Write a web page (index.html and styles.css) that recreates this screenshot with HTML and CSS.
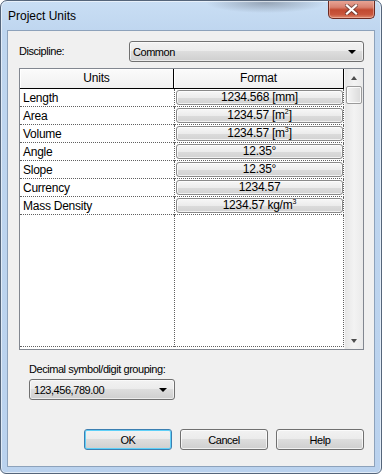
FILE: index.html
```html
<!DOCTYPE html>
<html>
<head>
<meta charset="utf-8">
<link rel="stylesheet" href="styles.css">
</head>
<body>
<div class="window">
  <div class="titlebar">
    <span class="title">Project Units</span>
    <div class="close">
      <svg width="13" height="11" viewBox="0 0 13 11">
        <path d="M2 1.5 L11 9.5 M11 1.5 L2 9.5" stroke="#3a2a2a" stroke-width="4" stroke-linecap="square" fill="none" opacity="0.55"/>
        <path d="M2 1.5 L11 9.5 M11 1.5 L2 9.5" stroke="#ffffff" stroke-width="2.2" stroke-linecap="square" fill="none"/>
      </svg>
    </div>
  </div>
  <div class="client">
    <div class="discipline">
      <span class="label">Discipline:</span>
      <div class="combo combo-wide"><span>Common</span><span class="arrow"></span></div>
    </div>
    <div class="grid">
      <div class="grid-main">
        <div class="grow head">
          <div class="hcell c1">Units</div>
          <div class="hcell c2">Format</div>
        </div>
        <div class="grow"><div class="cell c1">Length</div><div class="cell c2"><div class="fbtn"><span>1234.568 [mm]</span></div></div></div>
        <div class="grow"><div class="cell c1">Area</div><div class="cell c2"><div class="fbtn"><span>1234.57 [m<sup>2</sup>]</span></div></div></div>
        <div class="grow"><div class="cell c1">Volume</div><div class="cell c2"><div class="fbtn"><span>1234.57 [m<sup>3</sup>]</span></div></div></div>
        <div class="grow"><div class="cell c1">Angle</div><div class="cell c2"><div class="fbtn"><span>12.35°</span></div></div></div>
        <div class="grow"><div class="cell c1">Slope</div><div class="cell c2"><div class="fbtn"><span>12.35°</span></div></div></div>
        <div class="grow"><div class="cell c1">Currency</div><div class="cell c2"><div class="fbtn"><span>1234.57</span></div></div></div>
        <div class="grow"><div class="cell c1">Mass Density</div><div class="cell c2"><div class="fbtn"><span>1234.57 kg/m<sup>3</sup></span></div></div></div>
        <div class="grow fill"><div class="cell c1"></div><div class="cell c2"></div></div>
      </div>
      <div class="vscroll">
        <div class="sbtn"><span class="up"></span></div>
        <div class="thumb"></div>
        <div class="strack"></div>
        <div class="sbtn"><span class="down"></span></div>
      </div>
    </div>
    <div class="decimal">
      <div class="label">Decimal symbol/digit grouping:</div>
      <div class="combo combo-small"><span>123,456,789.00</span><span class="arrow"></span></div>
    </div>
    <div class="buttons">
      <div class="btn default">OK</div>
      <div class="btn">Cancel</div>
      <div class="btn">Help</div>
    </div>
  </div>
</div>
</body>
</html>
```

FILE: styles.css
```css
html, body {
  margin: 0;
  padding: 0;
  background: #ffffff;
}

.window {
  width: 382px;
  height: 474px;
  box-sizing: border-box;
  border: 1px solid #55657a;
  border-radius: 7px 7px 6px 6px;
  background:
    radial-gradient(ellipse 60px 10px at 265px 2px, rgba(110, 120, 135, 0.55), rgba(110, 120, 135, 0) 100%),
    linear-gradient(to bottom, #c9def4 0px, #bfd6ef 30px, #bad2ee 100%);
  box-shadow: inset 0 0 0 1px rgba(255, 255, 255, 0.55);
  display: flex;
  flex-direction: column;
  font-family: "Liberation Sans", Arial, sans-serif;
  color: #000;
  overflow: hidden;
}

.titlebar {
  height: 29px;
  display: flex;
  justify-content: space-between;
  align-items: flex-start;
  flex: none;
}

.title {
  font-size: 12px;
  padding: 8px 0 0 7px;
  line-height: 14px;
  color: #000;
}

.close {
  width: 47px;
  height: 19px;
  margin-right: 6px;
  margin-top: -1px;
  box-sizing: border-box;
  border: 1px solid #6b2a22;
  border-top: none;
  border-radius: 0 0 5px 5px;
  background: linear-gradient(to bottom, #e9a99a 0%, #d88270 40%, #c24a31 55%, #c8553c 80%, #de8a6e 100%);
  box-shadow: inset 0 0 0 1px rgba(255, 210, 200, 0.45);
  display: flex;
  align-items: center;
  justify-content: center;
}

.client {
  flex: 1;
  margin: 0 6px 6px 6px;
  border: 1px solid #8da2bb;
  background: #f0f0f0;
  padding: 10px 10px 16px 11px;
  display: flex;
  flex-direction: column;
  font-size: 11px;
  letter-spacing: -0.45px;
}

.discipline {
  display: flex;
  align-items: center;
  justify-content: space-between;
  height: 21px;
}

.label {
  line-height: 13px;
}

.combo {
  box-sizing: border-box;
  height: 21px;
  border: 1px solid #707070;
  border-radius: 3px;
  background: linear-gradient(to bottom, #f2f2f2 0%, #ebebeb 50%, #dddddd 50%, #cfcfcf 100%);
  box-shadow: inset 0 0 0 1px rgba(255, 255, 255, 0.6);
  display: flex;
  align-items: center;
  justify-content: space-between;
  padding: 0 7px 0 3px;
}

.combo-wide {
  width: 235px;
}

.arrow {
  width: 0;
  height: 0;
  border-left: 4px solid transparent;
  border-right: 4px solid transparent;
  border-top: 4px solid #000;
  margin-top: 1px;
}

.grid {
  margin-top: 6px;
  height: 282px;
  box-sizing: border-box;
  border: 1px solid #828790;
  display: flex;
  background: #fff;
}

.grid-main {
  flex: 1;
  display: flex;
  flex-direction: column;
  padding-bottom: 2px;
}

.grow {
  display: flex;
  height: 18px;
  flex: none;
}

.c1 {
  width: 154px;
  box-sizing: border-box;
}

.c2 {
  width: 170px;
  box-sizing: border-box;
}

.head {
  height: 20px;
}

.hcell {
  background: linear-gradient(to bottom, #fbfbfb, #f0f0f0);
  border-right: 1px solid #000;
  border-bottom: 1px solid #000;
  box-shadow: inset 1px 1px 0 #ffffff;
  font-size: 12px;
  letter-spacing: -0.2px;
  display: flex;
  align-items: center;
  justify-content: center;
  padding-bottom: 1px;
}

.cell {
  border-bottom: 1px dotted #606060;
  font-size: 12px;
  letter-spacing: -0.25px;
  display: flex;
  align-items: center;
}

.cell.c1 {
  padding-left: 3px;
}

.cell.c2 {
  border-left: 1px dotted #606060;
  border-right: 1px dotted #606060;
  padding: 1px 0 1px 1px;
  align-items: stretch;
}

.fill {
  flex: 1;
  height: auto;
}

.fbtn {
  flex: 1;
  box-sizing: border-box;
  border: 1px solid #8a8a8a;
  border-radius: 3px;
  background: linear-gradient(to bottom, #f7f7f7 0%, #ececec 50%, #dcdcdc 51%, #d2d2d2 100%);
  box-shadow: inset 0 0 0 1px rgba(255, 255, 255, 0.7);
  display: flex;
  align-items: center;
  justify-content: center;
  line-height: 13px;
  white-space: nowrap;
}

sup {
  font-size: 7px;
  line-height: 0;
  vertical-align: 5px;
  letter-spacing: 0;
}

.vscroll {
  width: 19px;
  display: flex;
  flex-direction: column;
  background: linear-gradient(to right, #e6e6e6, #f3f3f3 50%, #eaeaea);
  border-left: 1px solid #f7f7f7;
  box-sizing: border-box;
}

.sbtn {
  height: 17px;
  display: flex;
  align-items: center;
  justify-content: center;
  flex: none;
}

.up {
  width: 0;
  height: 0;
  border-left: 3.5px solid transparent;
  border-right: 3.5px solid transparent;
  border-bottom: 4px solid #4d4d4d;
}

.down {
  width: 0;
  height: 0;
  border-left: 3.5px solid transparent;
  border-right: 3.5px solid transparent;
  border-top: 4px solid #4d4d4d;
}

.thumb {
  height: 16px;
  margin: 0 1px 0 1px;
  border: 1px solid #9b9b9b;
  border-radius: 2px;
  background: linear-gradient(to right, #f6f6f6, #e8e8e8 50%, #dadada);
  box-shadow: inset 0 0 0 1px rgba(255, 255, 255, 0.8);
  flex: none;
}

.strack {
  flex: 1;
}

.decimal {
  margin-top: 13px;
  padding-left: 10px;
  display: flex;
  flex-direction: column;
  gap: 3px;
}

.combo-small {
  width: 146px;
  padding-left: 4px;
}

.buttons {
  margin-top: 29px;
  display: flex;
  justify-content: flex-end;
  gap: 8px;
  padding-right: 0;
}

.btn {
  width: 88px;
  height: 21px;
  box-sizing: border-box;
  border: 1px solid #707070;
  border-radius: 3px;
  background: linear-gradient(to bottom, #f2f2f2 0%, #ebebeb 50%, #dddddd 50%, #cfcfcf 100%);
  box-shadow: inset 0 0 0 1px rgba(255, 255, 255, 0.7);
  display: flex;
  align-items: center;
  justify-content: center;
}

.btn.default {
  border-color: #3c7fb1;
  box-shadow: inset 0 0 0 1px #5fd0f8;
}
```
